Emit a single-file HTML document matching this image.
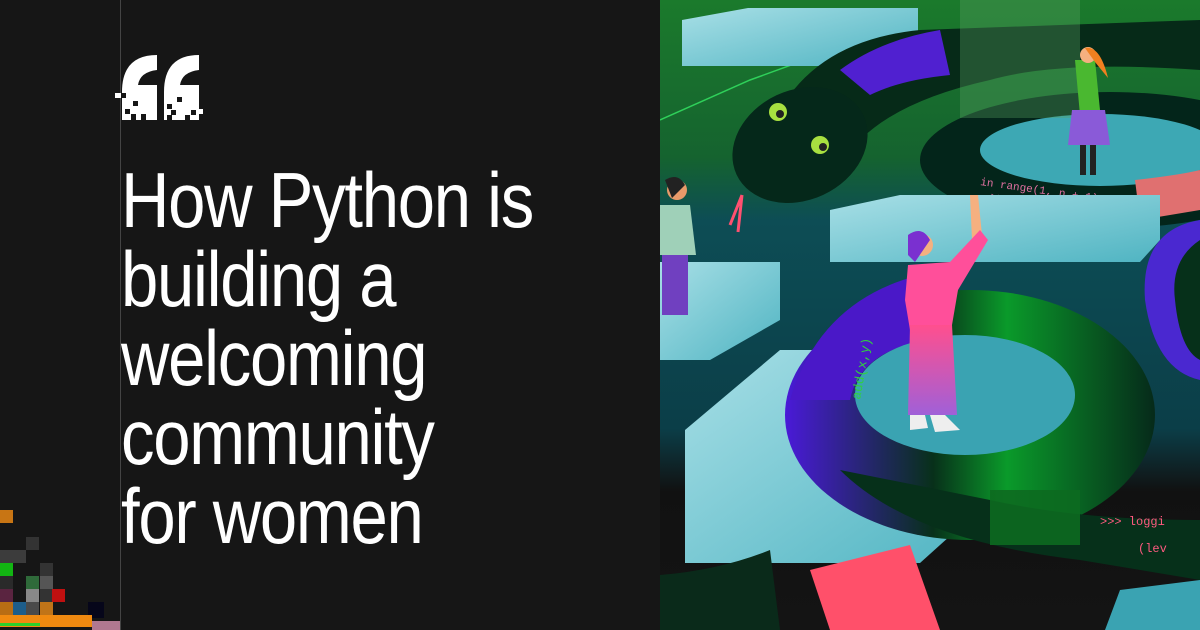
<!DOCTYPE html>
<html><head><meta charset="utf-8"><style>
html,body{margin:0;padding:0;}
body{width:1200px;height:630px;overflow:hidden;background:#161616;position:relative;font-family:"Liberation Sans",sans-serif;}
.vl{position:absolute;left:120px;top:0;width:1px;height:630px;background:#444;}
.title{position:absolute;left:121px;top:161px;color:#fff;font-size:78px;line-height:79px;letter-spacing:-1.5px;font-weight:400;margin:0;transform:scaleX(0.86);transform-origin:0 0;white-space:nowrap;}
.px{position:absolute;}
svg.art{position:absolute;left:660px;top:0;}
</style></head><body>
<div class="vl"></div>
<svg class="px" style="left:0;top:0" width="220" height="140" viewBox="0 0 220 140">
<g fill="#fff">
<path d="M122 120 L122 92 Q122 55 157 55 L157 70 Q140 72 138 85 L157 85 L157 120 Z"/>
<path d="M164 120 L164 92 Q164 55 199 55 L199 70 Q182 72 180 85 L199 85 L199 120 Z"/>
<rect x="115" y="93" width="6" height="5"/>
<rect x="199" y="109" width="4" height="5"/>
</g>
<g fill="#161616">
<rect x="121" y="93" width="5" height="5"/><rect x="133" y="101" width="5" height="5"/><rect x="125" y="109" width="5" height="5"/><rect x="131" y="114" width="5" height="6"/><rect x="141" y="114" width="5" height="6"/>
<rect x="177" y="97" width="5" height="5"/><rect x="167" y="104" width="5" height="5"/><rect x="171" y="110" width="5" height="5"/><rect x="191" y="110" width="5" height="5"/><rect x="167" y="115" width="5" height="5"/><rect x="185" y="115" width="5" height="5"/>
</g>
</svg>
<div class="title">How Python is<br>building a<br>welcoming<br>community<br>for women</div>
<div class="px" style="left:0;top:510px;width:13px;height:13px;background:#c87514"></div>
<div class="px" style="left:26px;top:537px;width:13px;height:13px;background:#333"></div>
<div class="px" style="left:0;top:550px;width:26px;height:13px;background:#3c3c3c"></div>
<div class="px" style="left:0;top:563px;width:13px;height:13px;background:#12b512"></div>
<div class="px" style="left:40px;top:563px;width:13px;height:13px;background:#333"></div>
<div class="px" style="left:0;top:576px;width:13px;height:13px;background:#2a2a2a"></div>
<div class="px" style="left:26px;top:576px;width:13px;height:13px;background:#2f6a3a"></div>
<div class="px" style="left:40px;top:576px;width:13px;height:13px;background:#555"></div>
<div class="px" style="left:0;top:589px;width:13px;height:13px;background:#5a2440"></div>
<div class="px" style="left:26px;top:589px;width:13px;height:13px;background:#888"></div>
<div class="px" style="left:40px;top:589px;width:13px;height:13px;background:#333"></div>
<div class="px" style="left:52px;top:589px;width:13px;height:13px;background:#c01010"></div>
<div class="px" style="left:0;top:602px;width:13px;height:13px;background:#b86d14"></div>
<div class="px" style="left:13px;top:602px;width:13px;height:13px;background:#1d5d8a"></div>
<div class="px" style="left:26px;top:602px;width:13px;height:13px;background:#4a4a4a"></div>
<div class="px" style="left:40px;top:602px;width:13px;height:13px;background:#c07418"></div>
<div class="px" style="left:88px;top:602px;width:16px;height:16px;background:#06061a"></div>
<div class="px" style="left:0;top:615px;width:92px;height:12px;background:#f08a10"></div>
<div class="px" style="left:0;top:623px;width:40px;height:3px;background:#2bd02b"></div>
<div class="px" style="left:92px;top:621px;width:28px;height:9px;background:#b07890"></div>
<svg class="art" width="540" height="630" viewBox="0 0 540 630">
<defs>
<linearGradient id="bg" x1="0" y1="0" x2="0" y2="1">
<stop offset="0" stop-color="#1b7a2c"/><stop offset="0.25" stop-color="#15632f"/><stop offset="0.35" stop-color="#0d4d55"/><stop offset="0.68" stop-color="#0b3e48"/><stop offset="0.78" stop-color="#111"/><stop offset="1" stop-color="#141414"/>
</linearGradient>
<linearGradient id="plat" x1="0" y1="0" x2="1" y2="1"><stop offset="0" stop-color="#a8dfe6"/><stop offset="1" stop-color="#4fb4c2"/></linearGradient>
<linearGradient id="pink" x1="0" y1="0" x2="0" y2="1"><stop offset="0" stop-color="#ff4f8e"/><stop offset="1" stop-color="#a060d8"/></linearGradient>
<linearGradient id="ring" x1="0" y1="0" x2="1" y2="0"><stop offset="0" stop-color="#4a1ad8"/><stop offset="0.4" stop-color="#08301a"/><stop offset="0.6" stop-color="#0a9a2a"/><stop offset="1" stop-color="#062a1a"/></linearGradient>
</defs>
<rect width="540" height="630" fill="url(#bg)"/>
<path d="M0 120 L90 80 L200 40" stroke="#2fd05a" stroke-width="1.5" fill="none"/>
<path d="M22 20 L88 8 L258 8 L258 45 L210 66 L22 66 Z" fill="url(#plat)"/>
<path d="M120 110 Q160 40 260 30 L540 20 L540 70 Q400 60 330 80 Q240 100 200 140 Z" fill="#062a18"/>
<path d="M180 70 Q220 40 280 30 L290 75 Q240 80 210 95 Z" fill="#5020d0"/>
<ellipse cx="140" cy="145" rx="70" ry="55" fill="#05281a" transform="rotate(-25 140 145)"/>
<circle cx="118" cy="112" r="9" fill="#a8e040"/><circle cx="120" cy="114" r="4" fill="#222"/>
<circle cx="160" cy="145" r="9" fill="#a8e040"/><circle cx="163" cy="147" r="4" fill="#222"/>
<path d="M82 195 L70 225 M82 195 L78 232" stroke="#ff5070" stroke-width="3" fill="none"/>
<ellipse cx="450" cy="160" rx="190" ry="68" fill="#03251a"/>
<ellipse cx="440" cy="150" rx="120" ry="36" fill="#3da8b4"/>
<path d="M475 180 Q520 175 540 170 L540 210 L480 220 Z" fill="#e07070"/>
<rect x="300" y="0" width="120" height="118" fill="#5aa060" opacity="0.35"/>
<text x="320" y="185" font-family="Liberation Mono,monospace" font-size="11" fill="#e070a0" transform="rotate(8 320 185)">in range(1, n + 1):</text>
<text x="330" y="200" font-family="Liberation Mono,monospace" font-size="11" fill="#e070a0" transform="rotate(8 330 200)">&gt;&gt;&gt; total *= i</text>
<path d="M415 60 L435 60 L440 110 L420 115 Z" fill="#4ab830"/>
<path d="M412 110 L445 110 L450 145 L408 145 Z" fill="#8a5ad8"/>
<rect x="420" y="145" width="6" height="30" fill="#222"/><rect x="430" y="145" width="6" height="30" fill="#222"/>
<circle cx="428" cy="55" r="8" fill="#f5b080"/><path d="M425 48 Q440 45 448 78 L435 62 Z" fill="#f08020"/>
<path d="M170 210 L240 195 L500 195 L500 240 L480 262 L170 262 Z" fill="url(#plat)"/>
<path d="M0 262 L120 262 L120 320 L50 360 L0 360 Z" fill="url(#plat)"/>
<circle cx="17" cy="190" r="10" fill="#e89a6a"/><path d="M5 180 Q18 172 25 185 L12 198 Z" fill="#222"/>
<path d="M0 205 L30 205 L36 255 L0 255 Z" fill="#9fd0b8"/>
<path d="M2 255 L28 255 L28 315 L2 315 Z" fill="#7040c0"/>
<path d="M25 430 L120 350 L330 350 L330 500 L260 563 L25 563 Z" fill="url(#plat)"/>
<ellipse cx="310" cy="415" rx="185" ry="125" fill="url(#ring)"/>
<path d="M130 400 Q160 300 260 275 L270 340 Q200 350 190 400 Z" fill="#4a18c8"/>
<ellipse cx="305" cy="395" rx="110" ry="60" fill="#3aa3b2"/>
<path d="M180 470 Q250 540 420 560 L540 580 L540 520 Q420 520 330 500 Z" fill="#06301a"/>
<path d="M330 490 L420 490 L420 545 L330 545 Z" fill="#0d6a20" opacity="0.9"/>
<text x="440" y="525" font-family="Liberation Mono,monospace" font-size="12" fill="#ff5a80">&gt;&gt;&gt; loggi</text>
<text x="478" y="552" font-family="Liberation Mono,monospace" font-size="12" fill="#ff5a80">(lev</text>
<path d="M540 220 Q480 230 485 300 Q495 370 540 380 Z" fill="#4a28d0"/>
<path d="M540 240 Q510 260 515 300 Q520 350 540 360 Z" fill="#06301a"/>
<path d="M150 570 L250 545 L280 630 L170 630 Z" fill="#ff506a"/>
<path d="M0 575 Q60 570 110 550 L120 630 L0 630 Z" fill="#0a2a1a"/>
<path d="M460 590 L540 580 L540 630 L445 630 Z" fill="#3aa3b2"/>
<circle cx="262" cy="245" r="11" fill="#f5b080"/><path d="M248 235 Q262 225 270 240 L255 262 L248 255 Z" fill="#7a30d0"/>
<path d="M310 195 L318 195 L322 235 L312 240 Z" fill="#f5b080"/>
<path d="M248 265 L290 262 L320 230 L328 240 L298 290 L292 325 L250 330 L245 300 Z" fill="#ff4f9a"/>
<path d="M250 325 L292 325 L297 415 L248 415 Z" fill="url(#pink)"/>
<path d="M250 415 L265 415 L268 428 L250 430 Z" fill="#eee"/><path d="M270 415 L285 415 L300 430 L275 432 Z" fill="#eee"/>
<text x="200" y="400" font-family="Liberation Mono,monospace" font-size="13" fill="#30d040" transform="rotate(-80 200 400)">add(x,y)</text>
</svg>
</body></html>
